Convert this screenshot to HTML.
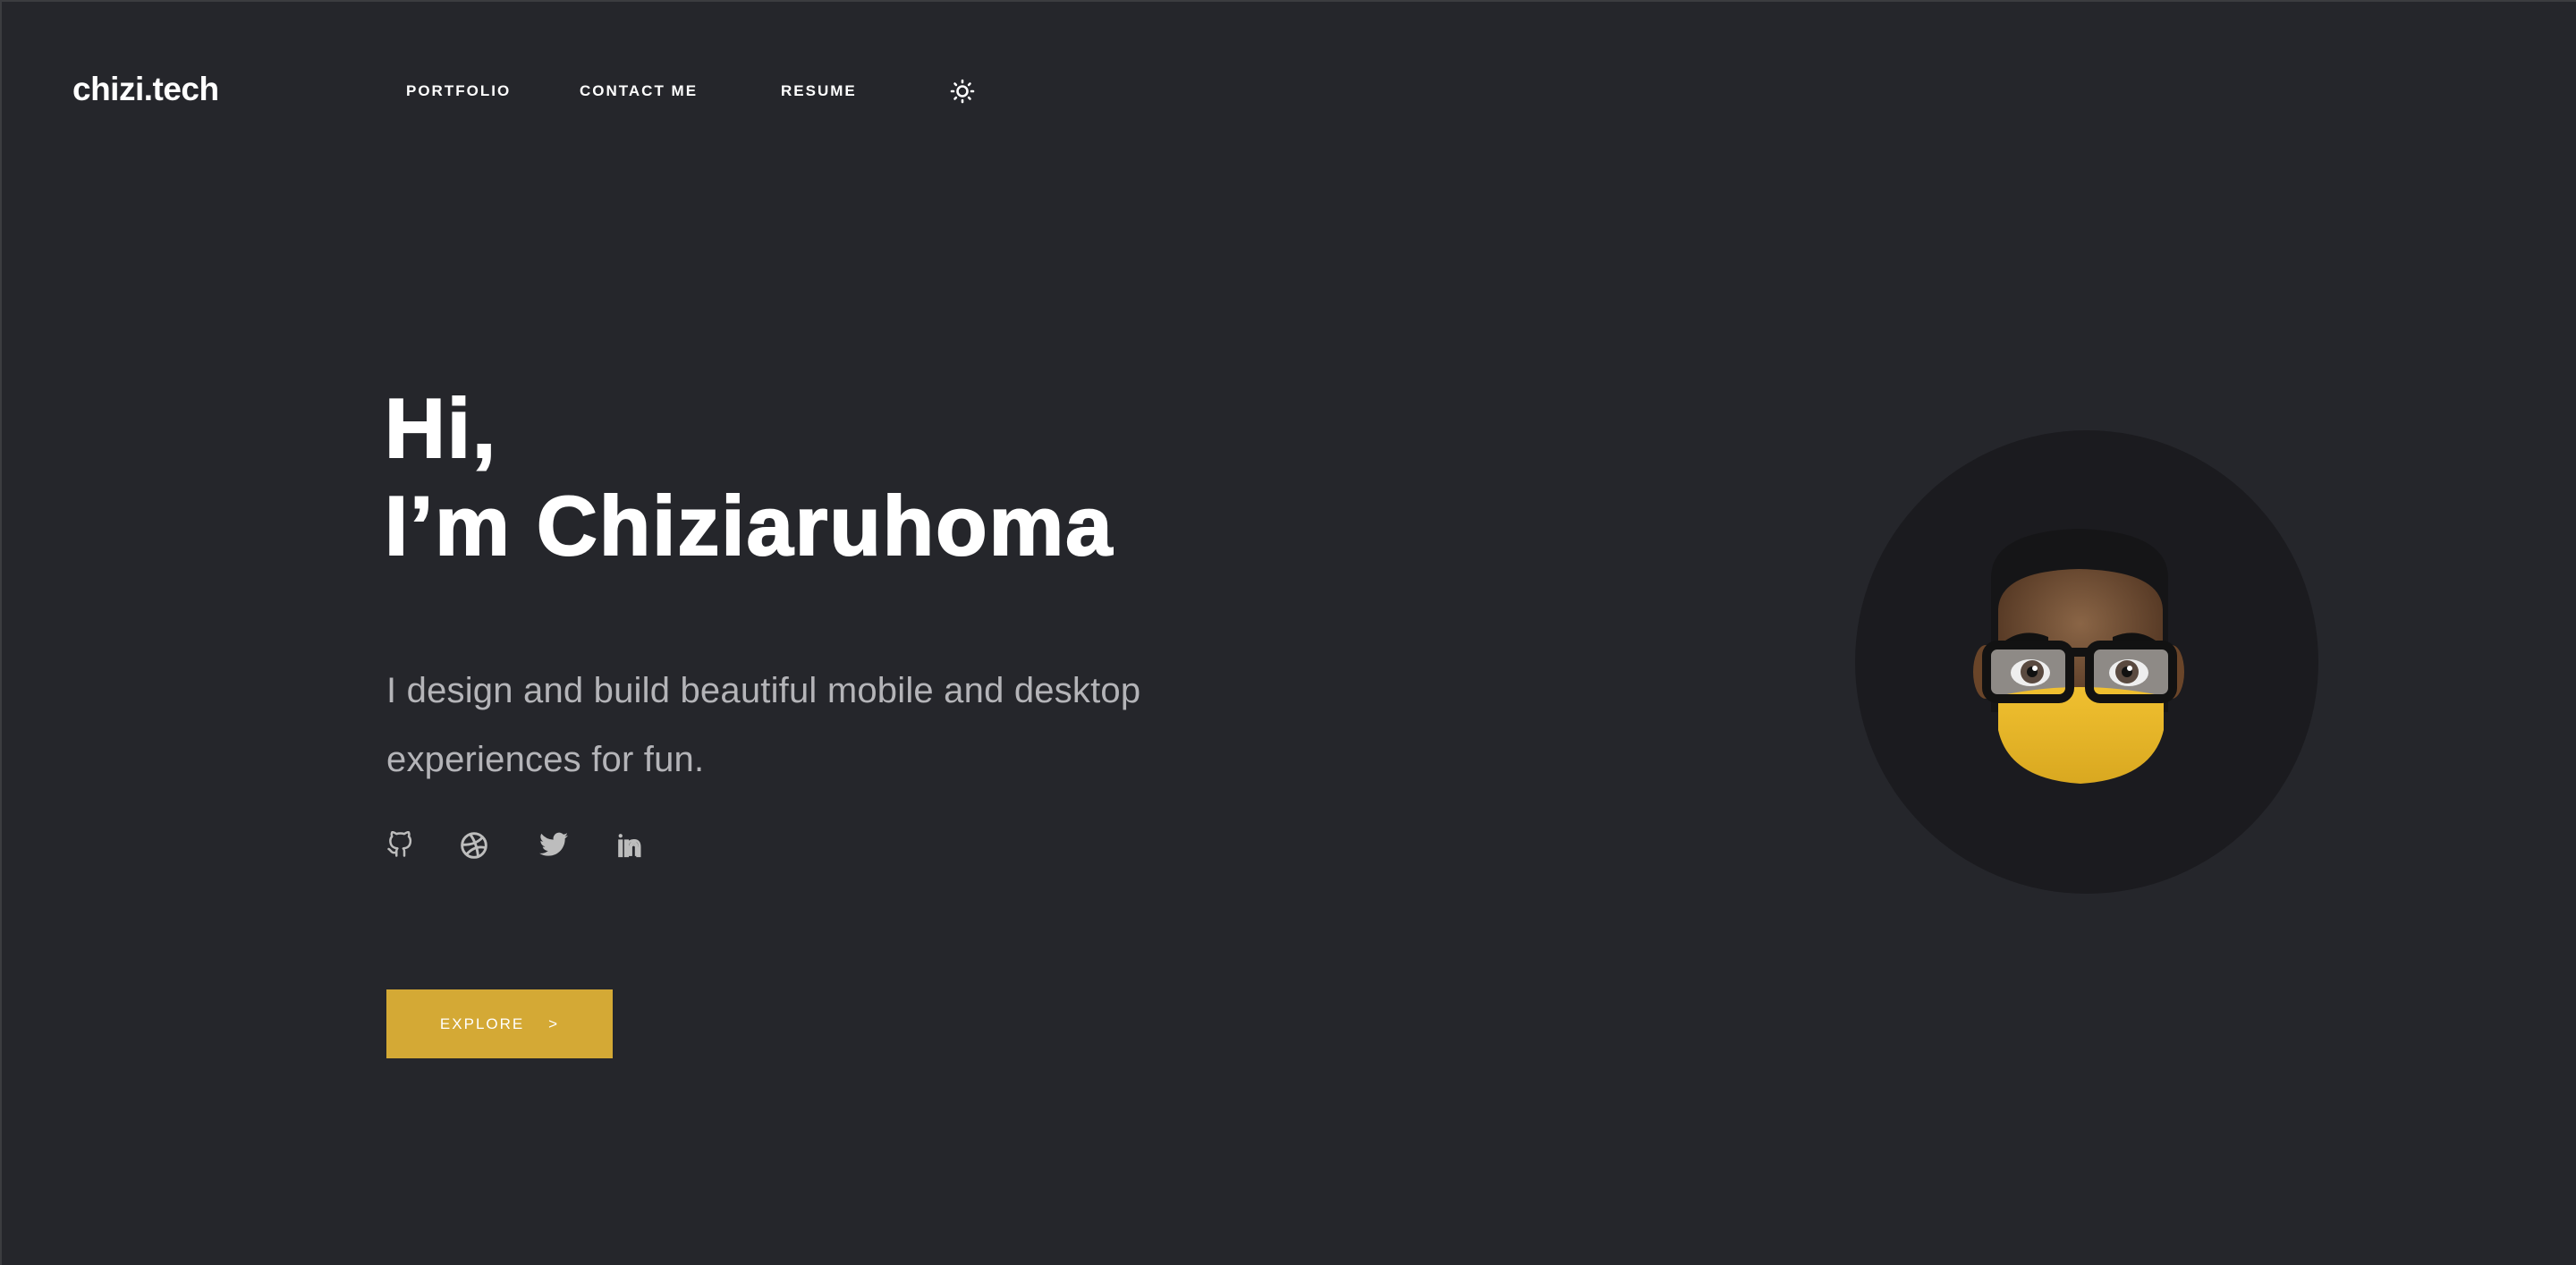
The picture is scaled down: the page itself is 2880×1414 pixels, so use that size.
<!DOCTYPE html>
<html><head><meta charset="utf-8"><style>
html,body{margin:0;padding:0;}
body{width:2880px;height:1414px;background:#25262b;position:relative;overflow:hidden;font-family:"Liberation Sans",sans-serif;box-shadow:inset 0 2px 0 #3b3c40, inset 2px 0 0 #3b3c40;}
.a{position:absolute;}
.logo{left:81px;top:79px;font-size:37px;font-weight:bold;color:#fff;letter-spacing:-0.5px;}
.nav{top:92px;font-size:17px;font-weight:bold;color:#fff;letter-spacing:2px;}
h1{position:absolute;left:430px;top:424px;margin:0;font-size:94px;line-height:109px;font-weight:bold;color:#fff;letter-spacing:2px;-webkit-text-stroke:2px #fff;}
.p{left:432px;top:734px;font-size:40px;line-height:77px;color:#b4b4b8;letter-spacing:0.2px;}
.btn{left:432px;top:1106px;width:253px;height:77px;background:#d4a935;color:#fff;font-size:17px;letter-spacing:2px;line-height:77px;text-align:center;}
</style></head><body>
<div class="a logo">chizi.tech</div>
<div class="a nav" style="left:454px">PORTFOLIO</div>
<div class="a nav" style="left:648px">CONTACT ME</div>
<div class="a nav" style="left:873px">RESUME</div>
<svg class="a" style="left:1062px;top:88px" width="28" height="28" viewBox="0 0 28 28" stroke="#fff" stroke-width="2.6" fill="none" stroke-linecap="round">
<circle cx="14" cy="14" r="5.5"/>
<path d="M14 2v2M14 24v2M2 14h2M24 14h2M5.5 5.5l1.4 1.4M21.1 21.1l1.4 1.4M5.5 22.5l1.4-1.4M21.1 6.9l1.4-1.4"/></svg>
<h1>Hi,<br>I’m Chiziaruhoma</h1>
<div class="a p">I design and build beautiful mobile and desktop<br>experiences for fun.</div>
<svg class="a" style="left:432px;top:929px" width="30" height="30" viewBox="0 0 24 24" fill="none" stroke="#bdbdbd" stroke-width="2" stroke-linecap="round" stroke-linejoin="round"><path d="M9 19c-5 1.5-5-2.5-7-3m14 6v-3.9a3.4 3.4 0 0 0-.9-2.6c3.1-.3 6.4-1.5 6.4-7A5.4 5.4 0 0 0 20 4.8 5 5 0 0 0 19.9 1S18.7.6 16 2.5a13.4 13.4 0 0 0-7 0C6.3.6 5.1 1 5.1 1A5 5 0 0 0 5 4.8a5.4 5.4 0 0 0-1.5 3.7c0 5.4 3.3 6.6 6.4 7a3.4 3.4 0 0 0-.9 2.6V22"/></svg>
<svg class="a" style="left:514px;top:929px" width="32" height="32" viewBox="0 0 24 24" fill="none" stroke="#bdbdbd" stroke-width="2.2"><circle cx="12" cy="12" r="10"/><path d="M8.6 2.6c4 5 6 11 6.8 18.6M19.1 5.2c-3.9 4.4-9 6.4-17 6.3M21.8 14c-5.9-1.5-11.5.4-15.9 5.3"/></svg>
<svg class="a" style="left:603px;top:930px" width="32" height="28" viewBox="0 0 24 20" fill="#bdbdbd"><path d="M24 2.4a9.8 9.8 0 0 1-2.8.8A4.9 4.9 0 0 0 23.3.4a9.8 9.8 0 0 1-3.1 1.2A4.9 4.9 0 0 0 11.8 6 14 14 0 0 1 1.7.9a4.9 4.9 0 0 0 1.5 6.6 4.9 4.9 0 0 1-2.2-.6v.1a4.9 4.9 0 0 0 3.9 4.8 4.9 4.9 0 0 1-2.2.1 4.9 4.9 0 0 0 4.6 3.4A9.9 9.9 0 0 1 0 17.3 14 14 0 0 0 7.5 19.5c9.1 0 14-7.5 14-14v-.6A10 10 0 0 0 24 2.4z"/></svg>
<svg class="a" style="left:690px;top:931px" width="28" height="28" viewBox="0 0 26 26" fill="none" stroke="#bdbdbd" stroke-width="2.4"><circle cx="3.5" cy="3" r="2" fill="#bdbdbd" stroke="none"/><path d="M2.3 8h2.4v16H2.3zM8.5 8h2.4v16H8.5zM10.9 12c1-3 3.5-4.3 6.5-4.3 4 0 6 2.5 6 7V24h-2.4v-9c0-3-1.3-5-3.8-5s-4 2-4 5v9"/><path d="M14.5 24v-9c0-1.5 1-2.6 2.6-2.6s2.5 1 2.5 2.6V24"/></svg>
<div class="a btn">EXPLORE &nbsp;&nbsp;&nbsp;&gt;</div>
<svg class="a" style="left:2074px;top:481px" width="518" height="518" viewBox="0 0 518 518">
<defs>
<radialGradient id="sk" cx="50%" cy="35%" r="60%"><stop offset="0" stop-color="#8a6546"/><stop offset="1" stop-color="#4f3320"/></radialGradient>
<linearGradient id="mk" x1="0" y1="0" x2="0" y2="1"><stop offset="0" stop-color="#f0c030"/><stop offset="1" stop-color="#d9a820"/></linearGradient>
</defs>
<circle cx="259" cy="259" r="259" fill="#1b1b1f"/>
<g transform="translate(0,-15)">
<ellipse cx="146" cy="285" rx="14" ry="30" fill="#6a4529"/>
<ellipse cx="354" cy="285" rx="14" ry="30" fill="#6a4529"/>
<path d="M152 180 Q152 128 250 125 Q350 128 350 180 L350 330 L152 330 Z" fill="#151517"/>
<path d="M160 215 Q162 172 250 170 Q342 172 344 215 L344 330 Q250 360 160 330 Z" fill="url(#sk)"/>
<path d="M168 250 q22-15 48-4 l0 8 q-24-6-48 4z M288 246 q26-11 48 4 l0 8 q-24-10-48-4z" fill="#111"/>
<rect x="147" y="255" width="93" height="60" rx="12" fill="#8e8a86"/>
<rect x="262" y="255" width="93" height="60" rx="12" fill="#8e8a86"/>
<ellipse cx="196" cy="286" rx="22" ry="15" fill="#eee"/><circle cx="198" cy="285" r="13" fill="#5a4a40"/><circle cx="198" cy="285" r="6" fill="#111"/><circle cx="201" cy="281" r="3" fill="#fff"/>
<ellipse cx="306" cy="286" rx="22" ry="15" fill="#eee"/><circle cx="304" cy="285" r="13" fill="#5a4a40"/><circle cx="304" cy="285" r="6" fill="#111"/><circle cx="307" cy="281" r="3" fill="#fff"/>
<path d="M160 312 Q250 292 345 312 L345 350 Q332 405 252 410 Q172 405 160 350 Z" fill="url(#mk)"/>
<rect x="147" y="255" width="93" height="60" rx="12" fill="none" stroke="#121212" stroke-width="10"/>
<rect x="262" y="255" width="93" height="60" rx="12" fill="none" stroke="#121212" stroke-width="10"/>
<rect x="238" y="258" width="26" height="10" fill="#121212"/>
</g>
</svg>
</body></html>
